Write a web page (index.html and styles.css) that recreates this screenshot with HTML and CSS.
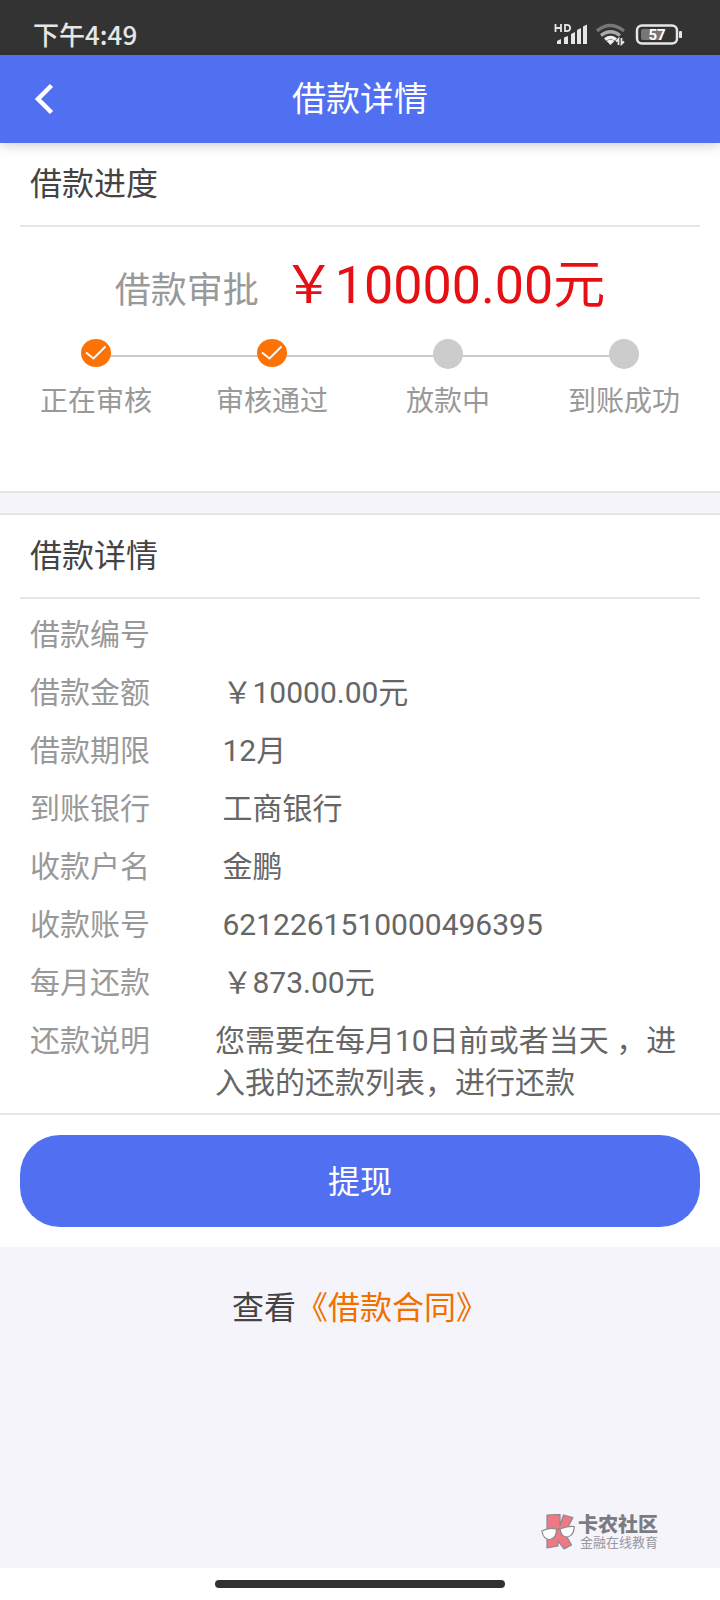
FILE: index.html
```html
<!DOCTYPE html>
<html lang="zh-CN">
<head>
<meta charset="utf-8">
<meta name="viewport" content="width=device-width, initial-scale=1">
<title>借款详情</title>
<link rel="stylesheet" href="styles.css">
</head>
<body>
<div class="page">
  <div class="status">
    <span class="time">下午4:49</span>
    <svg class="status-icons" width="130" height="26" viewBox="0 0 130 26" aria-hidden="true">
      <g fill="none" stroke="#e6e6e6" stroke-width="1.8">
        <path d="M1.5 1v8M7 1v8M1.5 5H7M11 1.9h1.5q3.600 0 3.600 3.100t-3.600 3.100H11z"/>
      </g>
      <g fill="#e6e6e6">
        <path d="M3 18l4-2v5H3zM10 14.500l4-1.500v8h-4zM17 11l4-2v12h-4zM23 7l4-2v16h-4zM29 3.500l4-2V21h-4z"/>
      </g>
      <g fill="none" stroke-width="3.200">
        <path d="M43 8q13-11 27 0" stroke="#777"/>
        <path d="M47 12.500q9.500-7.500 19 0" stroke="#aaa"/>
        <path d="M51 16.500q5.500-4 11 0" stroke="#eee"/>
      </g>
      <path d="M52.500 18q4-2.500 8 0l-4 4z" fill="#eee"/>
      <path d="M64.500 22v-6l-2.500 2.500M67.500 15v6l2.500-2.500" fill="none" stroke="#e6e6e6" stroke-width="1.800"/>
      <rect x="83" y="2.500" width="40" height="18" rx="5" fill="none" stroke="#e6e6e6" stroke-width="2.500"/>
      <rect x="87" y="6" width="21" height="11" rx="2" fill="#777"/>
      <rect x="125" y="8" width="3" height="7" rx="1" fill="#e6e6e6"/>
      <text x="103" y="17" class="battery-text" text-anchor="middle">57</text>
    </svg>
  </div>
  <header class="bar">
    <button class="back" type="button" aria-label="返回">
      <svg width="20" height="32" viewBox="0 0 20 32" aria-hidden="true"><path d="M17.500 2.500L4 16l13.500 13.500" fill="none" stroke="#fff" stroke-width="4.500"/></svg>
    </button>
    <h1 class="bar-title">借款详情</h1>
  </header>
  <main class="content">
    <section class="card progress">
      <h2 class="card-title">借款进度</h2>
      <p class="amount"><span class="amount-label">借款审批</span><span class="amount-value">￥10000.00元</span></p>
      <ol class="steps">
        <li class="step"><svg class="dot" viewBox="0 0 30 30" aria-hidden="true"><ellipse cx="15" cy="14" rx="15" ry="14" fill="#fb7307"/><path d="M5 13.500l7.500 6L24.500 7.500" fill="none" stroke="#fff" stroke-width="1.800"/></svg>正在审核</li>
        <li class="step"><svg class="dot" viewBox="0 0 30 30" aria-hidden="true"><ellipse cx="15" cy="14" rx="15" ry="14" fill="#fb7307"/><path d="M5 13.500l7.500 6L24.500 7.500" fill="none" stroke="#fff" stroke-width="1.800"/></svg>审核通过</li>
        <li class="step"><svg class="dot" viewBox="0 0 30 30" aria-hidden="true"><circle cx="15" cy="15" r="15" fill="#ccc"/></svg>放款中</li>
        <li class="step"><svg class="dot" viewBox="0 0 30 30" aria-hidden="true"><circle cx="15" cy="15" r="15" fill="#ccc"/></svg>到账成功</li>
      </ol>
    </section>
    <section class="card">
      <h2 class="card-title">借款详情</h2>
      <dl class="details">
        <div class="row"><dt>借款编号</dt><dd></dd></div>
        <div class="row"><dt>借款金额</dt><dd>&nbsp;￥10000.00元</dd></div>
        <div class="row"><dt>借款期限</dt><dd>&nbsp;12月</dd></div>
        <div class="row"><dt>到账银行</dt><dd>&nbsp;工商银行</dd></div>
        <div class="row"><dt>收款户名</dt><dd>&nbsp;金鹏</dd></div>
        <div class="row"><dt>收款账号</dt><dd>&nbsp;6212261510000496395</dd></div>
        <div class="row"><dt>每月还款</dt><dd>&nbsp;￥873.00元</dd></div>
        <div class="row"><dt>还款说明</dt><dd>您需要在每月10日前或者当天&nbsp;，进入我的还款列表，进行还款</dd></div>
      </dl>
    </section>
    <div class="action"><button class="withdraw" type="button">提现</button></div>
    <p class="contract">查看<a class="contract-link" href="#">《借款合同》</a></p>
    <div class="brand">
      <svg width="34" height="36" viewBox="0 0 34 36" aria-hidden="true">
        <path d="M6 1L19 .5v11L22.500 1l9.500 2.500-6.500 12-2 3 7 12.500-7.500 4-6-8v5L6 34z" fill="#ee6470" stroke="#77777f" stroke-width="1.200" stroke-linejoin="round"/>
        <g fill="#fff" stroke="#77777f" stroke-width="1.200">
          <path d="M.8 17q7-4 14.700-2 0 10-7 10.500-6 0-7.700-8.500z"/>
          <path d="M19 15q7-3.500 14.200-2.500 0 9.500-7 10.500-6 0-7.200-8z"/>
          <path d="M15.500 16q2-2 3.500-1" fill="none"/>
        </g>
      </svg>
      <div class="brand-text"><span class="brand-name">卡农社区</span><span class="brand-sub">金融在线教育</span></div>
    </div>
  </main>
  <div class="home"><span class="home-bar"></span></div>
</div>
</body>
</html>
```
FILE: styles.css
```css
* { box-sizing: border-box; }
body {
  margin: 0;
  background: #fff;
  color: #444;
  font-family: Roboto, "Noto Sans CJK SC", sans-serif;
  font-size: 30px;
}
h1, h2, p, ol, dl, dd { margin: 0; padding: 0; font-weight: 400; }
button { border: 0; padding: 0; font: inherit; color: #fff; cursor: pointer; }
.page { display: flex; flex-direction: column; min-height: 100vh; }

.status {
  display: flex;
  align-items: flex-end;
  justify-content: space-between;
  height: 55px;
  padding: 0 36px 5px 33px;
  background: #333;
}
.status-icons { margin-bottom: 1px; }
.time {
  font-family: "Noto Sans CJK SC", sans-serif;
  font-size: 26px;
  font-weight: 500;
  line-height: 32px;
  color: #e6e6e6;
}
.battery-text { font: 700 15px Roboto, sans-serif; fill: #fff; }

.bar {
  position: relative;
  z-index: 1;
  display: grid;
  grid-template-columns: 88px 1fr 88px;
  align-items: center;
  height: 88px;
  background: #506ff1;
  box-shadow: 0 2px 12px rgba(0, 0, 0, .2);
}
.back { display: flex; align-items: center; height: 88px; padding-left: 34px; background: none; }
.bar-title { font-size: 34px; line-height: 44px; text-align: center; color: #fff; }

.content { display: flex; flex: 1; flex-direction: column; background: #f4f4fa; }
.card { padding: 0 20px; background: #fff; border-bottom: 2px solid #e5e5e5; }
.card + .card { margin-top: 20px; border-top: 2px solid #e5e5e5; }
.card-title {
  padding: 21px 10px;
  border-bottom: 2px solid #e5e5e5;
  font-size: 32px;
  line-height: 40px;
}
.progress { padding-bottom: 69px; }
.amount {
  display: flex;
  align-items: baseline;
  justify-content: center;
  gap: 24px;
  padding: 29px 0 18px;
  line-height: 60px;
}
.amount-label { font-size: 36px; color: #999; }
.amount-value { font-size: 52px; color: #e60f13; }
.steps { display: flex; margin: 0 -12px; list-style: none; }
.step {
  position: relative;
  display: flex;
  flex: 1;
  flex-direction: column;
  align-items: center;
  gap: 13px;
  font-size: 28px;
  line-height: 40px;
  color: #999;
}
.step + .step::before {
  content: "";
  position: absolute;
  top: 16px;
  right: 50%;
  width: 100%;
  height: 2px;
  background: #ccc;
}
.dot { position: relative; z-index: 1; width: 30px; height: 30px; }

.details { padding: 7px 0 1px; }
.row {
  display: grid;
  grid-template-columns: 185px 1fr;
  padding: 8px 0 8px 10px;
  line-height: 42px;
}
.row dt { color: #999; }
.row dd { color: #666; }

.action { padding: 20px; background: #fff; }
.withdraw {
  display: block;
  width: 100%;
  height: 92px;
  padding-bottom: 4px;
  border-radius: 40px;
  background: #506ff1;
  font-size: 32px;
}
.contract { padding-top: 41px; font-size: 32px; line-height: 40px; text-align: center; }
.contract-link { color: #f07000; text-decoration: none; }

.brand { display: flex; align-items: center; align-self: flex-end; gap: 3px; margin: auto 62px 18px 0; opacity: .85; }
.brand-text {
  display: flex;
  flex-direction: column;
  font-family: "Noto Sans CJK SC", sans-serif;
}
.brand-name { font-size: 20px; font-weight: 900; line-height: 20px; color: #66666e; }
.brand-sub { padding-left: 2px; font-size: 13px; line-height: 16px; color: #88888e; }

.home { display: flex; align-items: center; justify-content: center; height: 32px; background: #fff; }
.home-bar { width: 290px; max-width: 60%; height: 8px; border-radius: 4px; background: #333; }
```
